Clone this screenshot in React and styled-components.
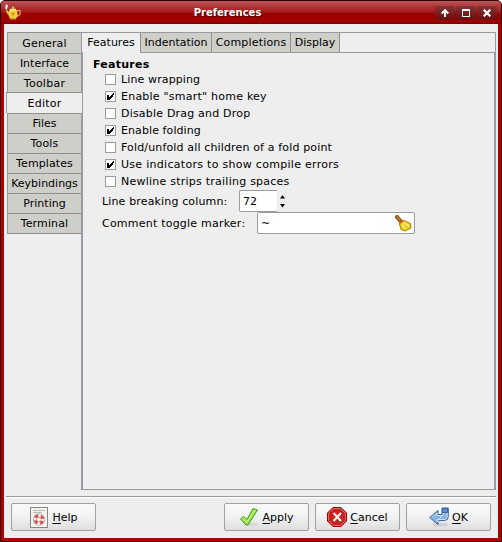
import React from "react";
import styled, { createGlobalStyle } from "styled-components";

const Global = createGlobalStyle`
  * { box-sizing: border-box; }
  body { margin: 0; background: #fff; font: 11px/14px "DejaVu Sans", sans-serif; color: #000; }
`;
const Window = styled.main`
  width: 502px; height: 542px; display: flex; flex-direction: column;
  background: #b00000; border: 1px solid #300000; border-radius: 5px 5px 0 0; overflow: hidden;
  padding: 0 3px 3px;
`;
const TitleBar = styled.header`
  height: 23px; flex: none; margin: 0 -3px; padding: 0 4px; display: grid;
  grid-template-columns: 17px 1fr 62px; align-items: center;
  background: linear-gradient(#bd5656 0, #b23b3b 20%, #a51919 48%, #9c0000 55%, #a00000 90%, #740000 100%);
`;
const Title = styled.h1`
  margin: 0; padding-right: 2px; font-size: 10px; line-height: 14px; color: #fff; text-align: center;
  text-shadow: 1px 1px 1px #400;
`;
const Controls = styled.div`display: flex; gap: 1px;`;
const Control = styled.button`
  width: 20px; height: 14px; padding: 0; border: 0; border-radius: 2px; display: flex;
  align-items: center; justify-content: center; background: linear-gradient(#843434, #6b0d0d);
`;
const Body = styled.div`
  flex: 1; background: #eee; display: flex; flex-direction: column; padding: 8px 2px 0 2px;
`;
const Notebook = styled.div`display: flex; height: 458px;`;
const SideTabs = styled.nav`width: 75px; padding-left: 1px; flex: none;`;
const SideTab = styled.div`
  height: ${p => p.$first || p.$active ? 21 : 20}px; text-align: center; line-height: 14px;
  padding-top: ${p => p.$first || p.$active ? 4 : 3}px; white-space: nowrap;
  margin: ${p => p.$active ? "-1px -1px 0 -1px" : 0};
  background: ${p => p.$active ? "#eee" : "#cfcfca"};
  border-left: 1px solid #989898; border-top: 1px solid #8f8f8c;
  position: relative; z-index: ${p => p.$active ? 1 : 0};
  letter-spacing: ${p => p.$ls || 0}px;
  &:last-child { height: 21px; border-bottom: 1px solid #8f8f8c; }
`;
const Outer = styled.div`
  width: 415px; border: 1px solid #9a9aa0; display: flex; flex-direction: column;
`;
const TopTabs = styled.div`display: flex; height: 20px; flex: none;`;
const TopTab = styled.div`
  width: ${p => p.$w}px; height: ${p => p.$active ? 20 : 19}px; text-align: center; padding-top: 3px;
  background: ${p => p.$active ? "#eee" : "#cfcfca"}; border-right: 1px solid #8f8f8c;
  letter-spacing: ${p => p.$ls || 0}px;
`;
const Page = styled.section`
  flex: 1; border-right: 1px solid #9a9aa0; border-left: 1px solid #9a9aa0; padding: 5px 0 0 10px;
  background: linear-gradient(#9a9aa0, #9a9aa0) 57px 0 / 100% 1px no-repeat;
  margin-top: -1px;
`;
const Heading = styled.h2`
  margin: 0; height: 14px; padding-top: 1px; font-size: 11px; line-height: 14px; letter-spacing: .25px;
`;
const CheckRow = styled.label`
  display: flex; height: 17px; padding-left: 12px; align-items: center; gap: 5px; white-space: nowrap;
  letter-spacing: ${p => p.$ls}px;
`;
const Box = styled.span`
  width: 11px; height: 11px; border: 1px solid #9a9aa0; background: #fff; display: block; flex: none;
  svg { display: block; }
`;
const Field = styled.div`display: flex; padding-left: 9px; height: 22px; align-items: center;`;
const FieldLabel = styled.span`
  width: ${p => p.$w}px; white-space: nowrap; padding-top: 2px; letter-spacing: ${p => p.$ls}px;
`;
const Entry = styled.div`
  width: ${p => p.$w}px; height: 22px; background: #fff; border: 1px solid #9a9aa0;
  border-right-width: ${p => p.$open ? 0 : 1}px; border-radius: ${p => p.$open ? "2px 0 0 2px" : "2px"};
  display: flex; align-items: center; justify-content: space-between; padding: 0 2px 0 3px;
  span { padding-top: 2px; }
`;
const Footer = styled.footer`
  margin-top: 6px; border-top: 1px solid #9a9aa0; box-shadow: inset 0 1px #fff; padding: 6px 5px 0 5px; display: flex; gap: 6px;
`;
const Button = styled.button`
  width: 85px; height: 28px; border: 1px solid #a0a0a5; border-radius: 2px; color: #000; padding: 0;
  background: linear-gradient(#fafafa, #f3f3f3 45%, #dedede); font: inherit; display: flex;
  align-items: center; justify-content: center; gap: 3px; margin-right: ${p => p.$push ? "auto" : 0};
  svg { margin-top: -1px; }
  span { padding-top: 2px; }
  u { text-underline-offset: 2px; }
`;

const Check = () => (
  <svg width="9" height="9" shapeRendering="crispEdges">
    <path d="M1 3h2v2h1v-1h1v-1h1v-1h1v-1h1v2h-1v2h-1v1h-1v1h-1v1h-3z" />
  </svg>
);
const Teapot = () => (
  <svg width="17" height="17" viewBox="0 0 17 17">
    <path d="M11.500 6.500H15V10.500L12 12.500" fill="none" stroke="#e9ad62" strokeWidth="1.200" />
    <path d="M1.500 6.500l2.500 4" stroke="#e8bd58" strokeWidth="2" />
    <path d="M4 6h8l.8 5L11 15H5L3.400 11Z" fill="#efd03a" />
    <path d="M5 5.500h6" stroke="#fff099" strokeWidth="1.500" />
    <circle cx="8" cy="3.800" r="1.200" fill="#efb83a" />
    <circle cx="8" cy="10" r="1.700" fill="#e0922c" />
    <path d="M5 14.800h6" stroke="#c98a18" strokeWidth="1.200" />
    <path d="M.3 5.500V2L1.500 0L3 1.500L2 5.500Z" fill="#f6e7e7" />
  </svg>
);
const Broom = () => (
  <svg width="17" height="17" viewBox="0 0 17 17">
    <path d="M2 2l3 3.500" stroke="#754c12" strokeWidth="4" strokeLinecap="round" />
    <path d="M2 2l3 3.500" stroke="#bd7a2c" strokeWidth="2" strokeLinecap="round" />
    <path d="M4.500 9L9 5.500L15.500 8.500L16 13L10 16L6 14.500Z" fill="#ead02e" stroke="#a28000" strokeLinejoin="round" />
    <path d="M7 9.500l3 4M9 8l5 3" stroke="#fff47b" strokeWidth="1.200" />
    <path d="M4 8.500L8.500 5" stroke="#d45a15" strokeWidth="1.400" />
  </svg>
);
const HelpIcon = () => (
  <svg width="20" height="22" viewBox="0 0 20 22">
    <rect x="1.500" y="1.500" width="17" height="20" fill="#f2f2ee" stroke="#858783" />
    <path d="M4 4.500h12M4 6.500h9" stroke="#b9bdb5" />
    <circle cx="10" cy="13.500" r="4" fill="none" stroke="#8b8b8b" strokeWidth="4" />
    <circle cx="10" cy="13.500" r="4" fill="none" stroke="#f3f3f3" strokeWidth="3" />
    <circle cx="10" cy="13.500" r="4" fill="none" stroke="#dc544b" strokeWidth="3" strokeDasharray="3.500 2.780" strokeDashoffset="-1.500" />
  </svg>
);
const ApplyIcon = () => (
  <svg width="20" height="20" viewBox="0 0 20 20">
    <ellipse cx="12" cy="17.500" rx="7" ry="2" fill="#d8d8d8" />
    <path d="M1.500 12L4.500 9.500L8 12.500L14 1.500L18.500 3L9 18H7Z" fill="#8bdc45" stroke="#4a9d16" strokeLinejoin="round" />
    <path d="M3.500 12L5 11L8.200 14.500L14.800 3L16.500 3.500L8 16Z" fill="none" stroke="#c1f47f" />
  </svg>
);
const CancelIcon = () => (
  <svg width="20" height="20" viewBox="0 0 20 20">
    <path d="M6 .5h8L19.500 6v8L14 19.500H6L.5 14V6Z" fill="#cc2020" stroke="#a00000" />
    <path d="M6.500 1.500h7L18.500 6.500v7L13.500 18.500h-7L1.500 13.500v-7Z" fill="none" stroke="#e26a6a" />
    <path d="M6.500 6l7.500 8M14 6l-7.500 8" stroke="#f6eeee" strokeWidth="2.200" />
  </svg>
);
const OkIcon = () => (
  <svg width="20" height="20" viewBox="0 0 20 20">
    <ellipse cx="11" cy="17.500" rx="8" ry="2" fill="#d2d2d2" />
    <path d="M.7 10.500L9 3.500v4h4V1h6.300V9.500q0 4-4 4H9v4Z" fill="#8ab2df" stroke="#37659f" strokeLinejoin="round" />
    <path d="M2.500 10.500L8 6v2.600h6M18.200 2V9.500q0 3-3 3H8v2.500Z" fill="none" stroke="#c8def3" />
    <path d="M13.500 1.500h5v4h-5z" fill="#6592c8" stroke="#37659f" />
  </svg>
);

const sections = [
  ["General", .15], ["Interface", 0], ["Toolbar", .25], ["Editor", .2], ["Files", 0],
  ["Tools", .2], ["Templates", .1], ["Keybindings", 0], ["Printing", 0], ["Terminal", .12],
];
const tabs = [["Features", 59, 0], ["Indentation", 71, 0], ["Completions", 79, .18], ["Display", 49, 0]];
const options = [
  ["Line wrapping", false, .12], ["Enable \"smart\" home key", true, .23],
  ["Disable Drag and Drop", false, .2], ["Enable folding", true, .09],
  ["Fold/unfold all children of a fold point", false, .15],
  ["Use indicators to show compile errors", true, .29],
  ["Newline strips trailing spaces", false, .24],
];

export default function App() {
  return <>
    <Global />
    <Window>
      <TitleBar>
        <Teapot />
        <Title>Preferences</Title>
        <Controls>
          <Control><svg width="8" height="8"><path d="M4 8V2M.7 4.500L4 1.200l3.300 3.300" fill="none" stroke="#fff" strokeWidth="2" /></svg></Control>
          <Control><svg width="8" height="8" shapeRendering="crispEdges"><path d="M0 0h8v8H0zM1 2v5h6V2z" fill="#fff" fillRule="evenodd" /></svg></Control>
          <Control><svg width="8" height="8"><path d="M.7.7l6.600 6.600M7.300.7L.7 7.300" stroke="#fff" strokeWidth="2.200" /></svg></Control>
        </Controls>
      </TitleBar>
      <Body>
        <Notebook>
          <SideTabs>
            {sections.map(([s, ls], i) => (
              <SideTab key={s} $first={i === 0} $active={s === "Editor"} $ls={ls}>{s}</SideTab>
            ))}
          </SideTabs>
          <Outer>
            <TopTabs>{tabs.map(([t, w, ls], i) => <TopTab key={t} $w={w} $ls={ls} $active={i === 0}>{t}</TopTab>)}</TopTabs>
            <Page>
              <Heading>Features</Heading>
              {options.map(([o, on, ls]) => <CheckRow key={o} $ls={ls}><Box>{on && <Check />}</Box>{o}</CheckRow>)}
              <Field>
                <FieldLabel $w={137} $ls={.15}>Line breaking column:</FieldLabel>
                <Entry $w={38} $open><span>72</span></Entry>
                <svg width="11" height="22"><path d="M3 8.500L5.500 5L8 8.500zM3 14L5.500 17.500L8 14z" /></svg>
              </Field>
              <Field>
                <FieldLabel $w={155} $ls={.22}>Comment toggle marker:</FieldLabel>
                <Entry $w={158}><span>~</span><Broom /></Entry>
              </Field>
            </Page>
          </Outer>
        </Notebook>
        <Footer>
          <Button $push><HelpIcon /><span><u>H</u>elp</span></Button>
          <Button><ApplyIcon /><span><u>A</u>pply</span></Button>
          <Button><CancelIcon /><span><u>C</u>ancel</span></Button>
          <Button><OkIcon /><span><u>O</u>K</span></Button>
        </Footer>
      </Body>
    </Window>
  </>;
}
